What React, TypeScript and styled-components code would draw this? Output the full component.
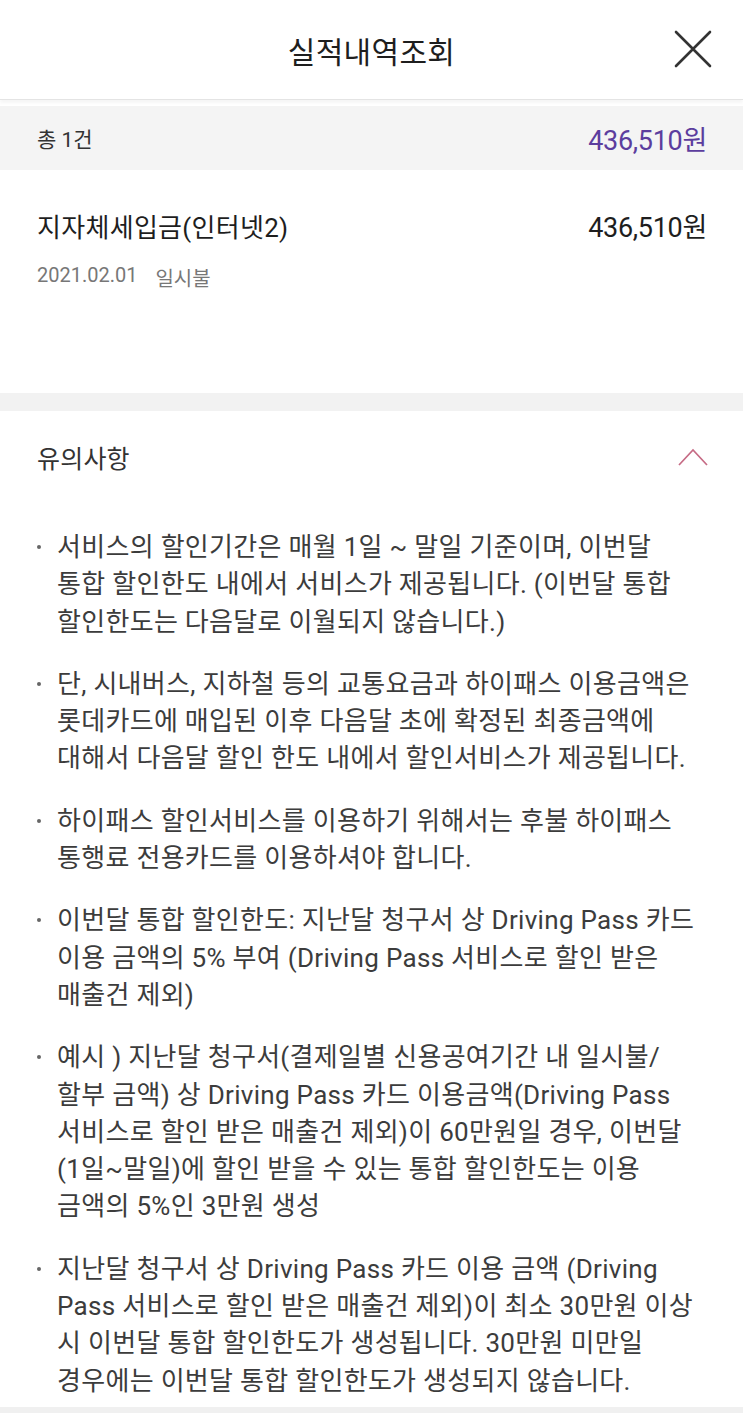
import React from "react";
import styled, { createGlobalStyle } from "styled-components";

const GlobalStyle = createGlobalStyle`
  html, body {
    margin: 0;
    padding: 0;
    background: #ffffff;
  }
  body {
    font-family: Roboto, "Noto Sans CJK KR", sans-serif;
    color: #222;
  }
`;

const Page = styled.div`
  width: 743px;
  min-height: 1413px;
  display: flex;
  flex-direction: column;
  background: #fff;
`;

const Header = styled.header`
  height: 99px;
  display: flex;
  align-items: center;
  justify-content: center;
  position: relative;
  border-bottom: 1px solid #e4e4e4;
  box-shadow: 0 3px 3px rgba(0, 0, 0, 0.04);
`;

const Title = styled.h1`
  margin: 0;
  font-size: 30px;
  font-weight: 400;
  color: #1e1e1e;
  letter-spacing: 0.3px;
`;

const CloseButton = styled.button`
  position: absolute;
  right: 30px;
  top: 29px;
  width: 40px;
  height: 40px;
  padding: 0;
  border: none;
  background: none;
  display: flex;
  align-items: center;
  justify-content: center;
`;

const SummaryBar = styled.div`
  margin-top: 6px;
  height: 64px;
  background: #f4f4f4;
  display: flex;
  align-items: center;
  justify-content: space-between;
  padding: 0 36px 0 37px;
`;

const SummaryLabel = styled.span`
  font-size: 21px;
  color: #333;
`;

const Amount = styled.span<{ $accent?: boolean }>`
  font-size: 27px;
  color: ${(p) => (p.$accent ? "#5c3d9e" : "#1e1e1e")};
  letter-spacing: -0.3px;
`;

const ItemSection = styled.section`
  height: 223px;
  padding: 36px 36px 0 37px;
  box-sizing: border-box;
`;

const ItemRow = styled.div`
  display: flex;
  justify-content: space-between;
  align-items: baseline;
`;

const ItemName = styled.span`
  font-size: 26px;
  color: #1e1e1e;
  letter-spacing: 0.3px;
`;

const ItemMeta = styled.div`
  margin-top: 18px;
  font-size: 20px;
  color: #777;
  display: flex;
  gap: 18px;
`;

const Gap = styled.div`
  height: 18px;
  background: #f2f2f2;
`;

const NoticeSection = styled.section`
  padding: 0 34px 0 37px;
  flex: 1;
`;

const NoticeHeader = styled.div`
  height: 92px;
  display: flex;
  align-items: center;
  justify-content: space-between;
`;

const NoticeTitle = styled.span`
  font-size: 25px;
  color: #333;
  letter-spacing: 0.2px;
`;

const NoticeList = styled.ul`
  list-style: none;
  margin: 0;
  padding: 26px 0 0 0;
  display: flex;
  flex-direction: column;
  gap: 25px;
`;

const NoticeItem = styled.li`
  position: relative;
  padding-left: 20px;
  font-size: 26px;
  line-height: 37.3px;
  color: #3c3c3c;
  letter-spacing: 0.3px;
  white-space: nowrap;

  &::before {
    content: "";
    position: absolute;
    left: 0;
    top: 16px;
    width: 4px;
    height: 4px;
    border-radius: 50%;
    background: #666;
  }
`;

const BottomBar = styled.div`
  height: 6px;
  background: #f0f0f0;
`;

const notices: string[][] = [
  [
    "서비스의 할인기간은 매월 1일 ~ 말일 기준이며, 이번달",
    "통합 할인한도 내에서 서비스가 제공됩니다. (이번달 통합",
    "할인한도는 다음달로 이월되지 않습니다.)",
  ],
  [
    "단, 시내버스, 지하철 등의 교통요금과 하이패스 이용금액은",
    "롯데카드에 매입된 이후 다음달 초에 확정된 최종금액에",
    "대해서 다음달 할인 한도 내에서 할인서비스가 제공됩니다.",
  ],
  [
    "하이패스 할인서비스를 이용하기 위해서는 후불 하이패스",
    "통행료 전용카드를 이용하셔야 합니다.",
  ],
  [
    "이번달 통합 할인한도: 지난달 청구서 상 Driving Pass 카드",
    "이용 금액의 5% 부여 (Driving Pass 서비스로 할인 받은",
    "매출건 제외)",
  ],
  [
    "예시 ) 지난달 청구서(결제일별 신용공여기간 내 일시불/",
    "할부 금액) 상 Driving Pass 카드 이용금액(Driving Pass",
    "서비스로 할인 받은 매출건 제외)이 60만원일 경우, 이번달",
    "(1일~말일)에 할인 받을 수 있는 통합 할인한도는 이용",
    "금액의 5%인 3만원 생성",
  ],
  [
    "지난달 청구서 상 Driving Pass 카드 이용 금액 (Driving",
    "Pass 서비스로 할인 받은 매출건 제외)이 최소 30만원 이상",
    "시 이번달 통합 할인한도가 생성됩니다. 30만원 미만일",
    "경우에는 이번달 통합 할인한도가 생성되지 않습니다.",
  ],
];

const CloseIcon = () => (
  <svg width="38" height="38" viewBox="0 0 38 38">
    <path
      d="M2 2 L36 36 M36 2 L2 36"
      stroke="#333"
      strokeWidth="2.6"
      strokeLinecap="round"
      fill="none"
    />
  </svg>
);

const ChevronUp = () => (
  <svg width="32" height="20" viewBox="0 0 32 20">
    <path
      d="M2 18 L16 3 L30 18"
      stroke="#c66b85"
      strokeWidth="1.7"
      fill="none"
    />
  </svg>
);

export default function App() {
  return (
    <Page>
      <GlobalStyle />
      <Header>
        <Title>실적내역조회</Title>
        <CloseButton aria-label="닫기">
          <CloseIcon />
        </CloseButton>
      </Header>
      <SummaryBar>
        <SummaryLabel>총 1건</SummaryLabel>
        <Amount $accent>436,510원</Amount>
      </SummaryBar>
      <ItemSection>
        <ItemRow>
          <ItemName>지자체세입금(인터넷2)</ItemName>
          <Amount>436,510원</Amount>
        </ItemRow>
        <ItemMeta>
          <span>2021.02.01</span>
          <span>일시불</span>
        </ItemMeta>
      </ItemSection>
      <Gap />
      <NoticeSection>
        <NoticeHeader>
          <NoticeTitle>유의사항</NoticeTitle>
          <ChevronUp />
        </NoticeHeader>
        <NoticeList>
          {notices.map((lines, i) => (
            <NoticeItem key={i}>
              {lines.map((line, j) => (
                <React.Fragment key={j}>
                  {j > 0 && <br />}
                  {line}
                </React.Fragment>
              ))}
            </NoticeItem>
          ))}
        </NoticeList>
      </NoticeSection>
      <BottomBar />
    </Page>
  );
}
